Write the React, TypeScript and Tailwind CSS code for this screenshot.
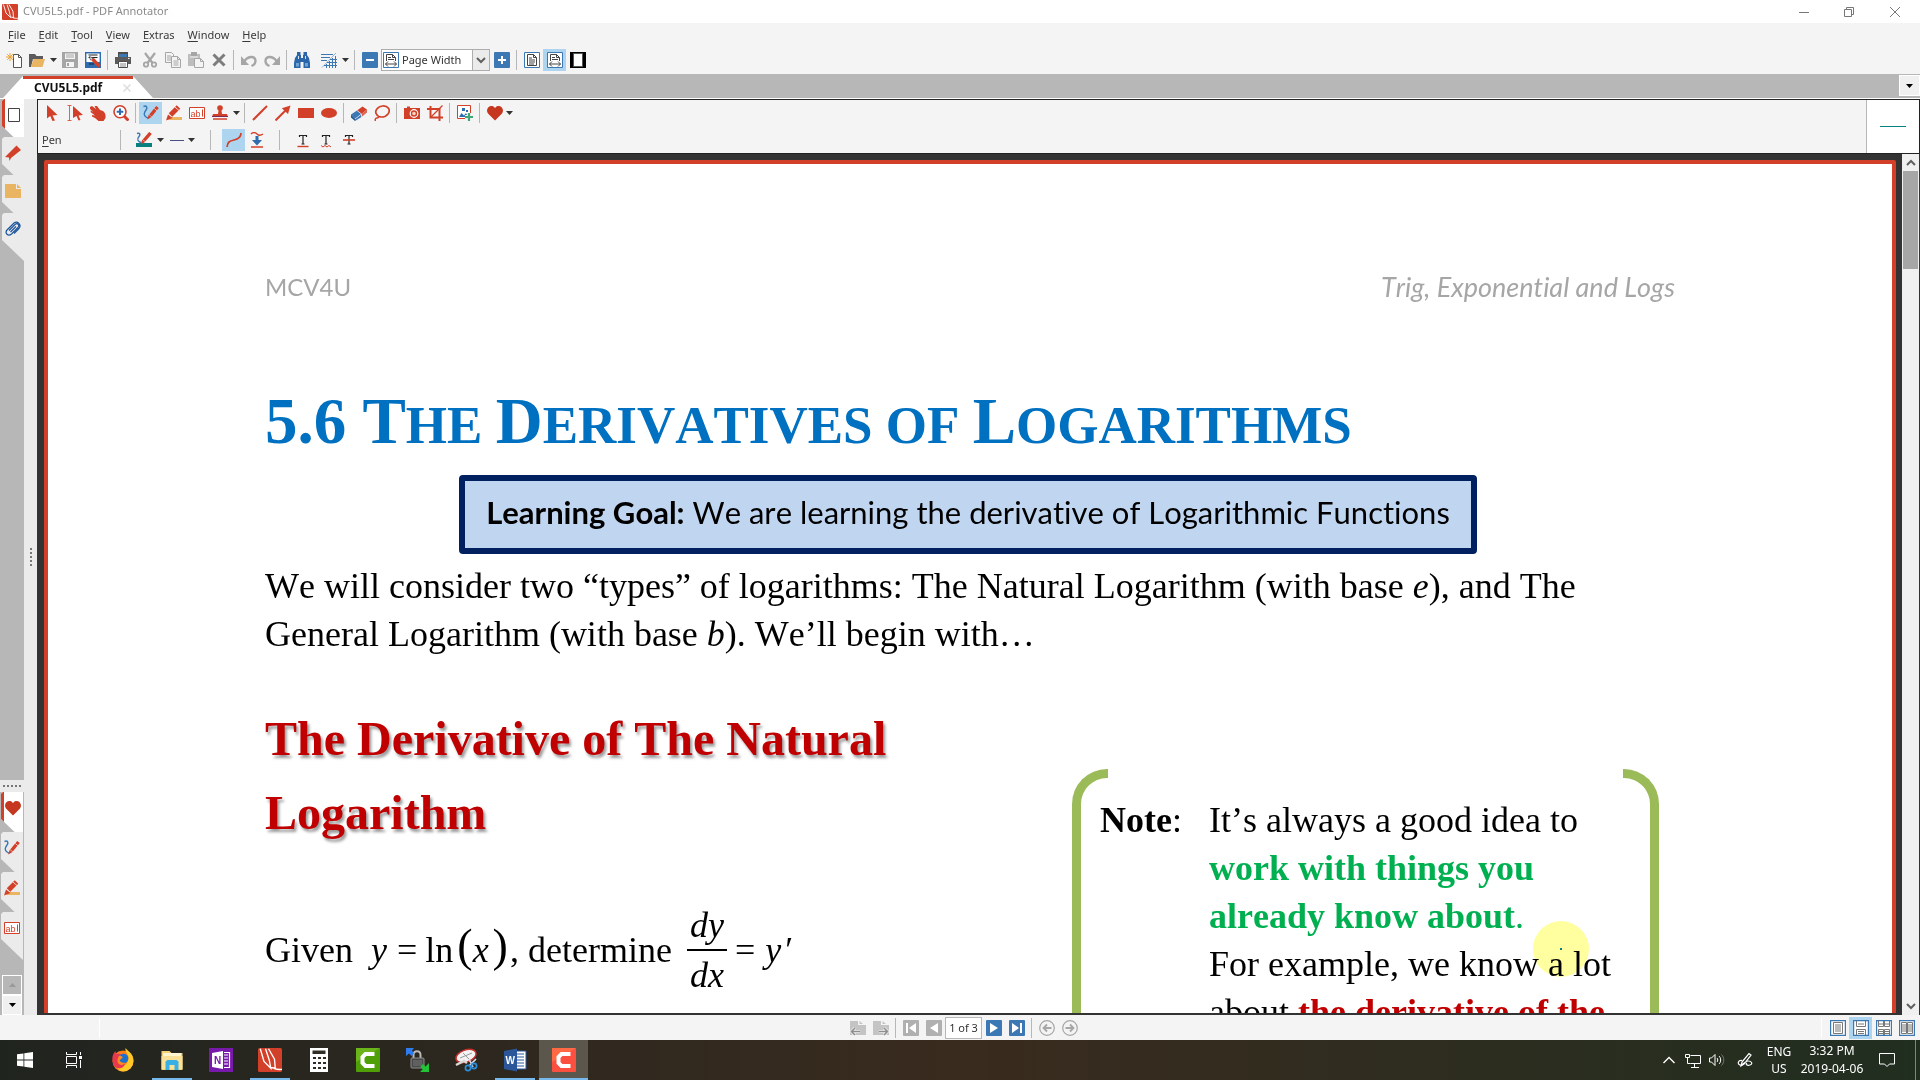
import type { ReactNode } from "react";
import clsx from "clsx";

const RED = "#d2402a";
const BLUE = "#3c78b4";
const GRAY = "#a6a6a6";
const DARK = "#555555";

function Svg({ children, size = 16, box = 16 }: { children: ReactNode; size?: number; box?: number }) {
  return (
    <svg width={size} height={size} viewBox={`0 0 ${box} ${box}`} fill="none" className="block shrink-0" aria-hidden="true">
      {children}
    </svg>
  );
}

/* ---------- Toolbar icons ---------- */

const AppLogo = ({ size = 16 }: { size?: number }) => (
  <Svg size={size}>
    <rect width="16" height="16" rx="1" fill={RED} />
    <path d="M1.500.5l2.500 8.500 4.500 4.500L7.500 8 5 .5M7 .5l4 7 .5 6-3-.5M10.500 13.500c2 .8 3.500 1 5.500.7" stroke="#fff" strokeWidth=".9" />
  </Svg>
);

const NewDoc = () => (
  <Svg>
    <path d="M7.500 2.500h5l3 3v10h-8z" fill="#fff" stroke={DARK} />
    <path d="M12.500 2.500v3h3" stroke={DARK} />
    <path d="M4 1v8M0 5h8M1.200 2.200l5.600 5.600M6.800 2.200L1.200 7.800" stroke="#e8a33a" />
  </Svg>
);

const OpenFolder = () => (
  <Svg>
    <path d="M0 2h6l1.500 2H14v3H4l-2 8H0z" fill="#5b5b5b" />
    <path d="M4.500 7H16l-2.500 8H2z" fill="#e9b563" />
  </Svg>
);

const Save = ({ color = GRAY }: { color?: string }) => (
  <Svg>
    <path d="M0 0h16v16H0z" fill={color} />
    <path d="M3 1.500h10v5.500H3z" fill="#f4f4f4" />
    <path d="M4 3h8M4 5h8" stroke={color} />
    <path d="M4 10h8v5H4z" fill="#f4f4f4" />
    <path d="M5 11h2v3H5z" fill={color} />
  </Svg>
);

const SaveAnnotated = () => (
  <Svg>
    <path d="M.7.700h14.600v14.600H.7z" fill="#fff" stroke="#2d6cb0" strokeWidth="1.400" />
    <path d="M1 10h14v5H1z" fill="#2d6cb0" />
    <path d="M3.500 3h9M3.500 5.500h9M4 12h5" stroke="#222" />
    <path d="M7.500 7l7 7.500" stroke={RED} strokeWidth="3.400" />
    <path d="M4.500 4.500l1 3.500 2.500-2z" fill="#fff" stroke="#222" strokeWidth=".6" />
  </Svg>
);

const Print = () => (
  <Svg>
    <path d="M3 0h10v5H3z" fill="#4d4d4d" />
    <path d="M4 2h8v3H4z" fill={BLUE} />
    <path d="M0 5h16v7H0z" fill="#5b5b5b" />
    <path d="M3.500 9.500h9v6h-9z" fill="#fff" stroke="#4d4d4d" />
    <path d="M5 12h6M5 14h6" stroke="#888" />
    <path d="M13 6.500h1.500" stroke="#fff" />
  </Svg>
);

const Cut = () => (
  <Svg>
    <path d="M3 1l7.500 10M13 1L5.500 11" stroke={GRAY} strokeWidth="2.200" />
    <circle cx="4" cy="12.500" r="2.200" stroke={GRAY} strokeWidth="1.800" />
    <circle cx="12" cy="12.500" r="2.200" stroke={GRAY} strokeWidth="1.800" />
  </Svg>
);

const Copy = () => (
  <Svg>
    <path d="M.5.500h6l2 2v8h-8zM2 4h4M2 6h4M2 8h4" stroke={GRAY} />
    <path d="M6.500 4.500h6l3 3v8h-9z" fill="#f4f4f4" stroke={GRAY} />
    <path d="M12.500 4.500v3h3M8.500 9h5M8.500 11h5M8.500 13h5" stroke={GRAY} />
  </Svg>
);

const Paste = () => (
  <Svg>
    <path d="M0 2h12v12H0z" fill="#bdbdbd" />
    <path d="M3 0h6v4H3z" fill={GRAY} />
    <path d="M2 5h8" stroke="#f4f4f4" />
    <path d="M6.500 6.500h6l3 3v6h-9z" fill="#f4f4f4" stroke={GRAY} />
    <path d="M12.500 6.500v3h3" stroke={GRAY} />
  </Svg>
);

const Delete = () => (
  <Svg>
    <path d="M2.500 2.500l11 11M13.500 2.500l-11 11" stroke="#7d7d7d" strokeWidth="3" />
  </Svg>
);

const Undo = ({ flip = false }: { flip?: boolean }) => (
  <Svg>
    <g transform={flip ? "translate(16 0) scale(-1 1)" : undefined}>
      <path d="M3 10c3-6 11.500-7 11.500-1 0 2-1.500 4-4 5" stroke={GRAY} strokeWidth="2.400" />
      <path d="M0 4v9h8z" fill={GRAY} />
    </g>
  </Svg>
);

const Binoculars = () => (
  <Svg>
    <path d="M3 0h3.500v3H7v3h2V3h.5V0H13v3l2 3 1 5v5H9.500V10h-3v6H0v-5l1-5 2-3z" fill="#2b67a8" />
    <path d="M2 11h3v3.500H2zM11 11h3v3.500h-3z" fill="#6ea3d8" />
    <path d="M4.500 4v3M11.500 4v3" stroke="#cfe2f5" />
  </Svg>
);

const GridTool = () => (
  <Svg>
    <path d="M0 2.500h12M0 5.500h9M0 8.500h6" stroke={BLUE} />
    <path d="M1 15.500L15 1" stroke="#8db3d8" />
    <path d="M3 13.500h13M6 10.500h10M9 7.500h7M5.500 12v4M8.500 9v7M11.500 6v10M14.500 4v12" stroke={BLUE} />
  </Svg>
);

const ZoomBox = ({ plus = false }: { plus?: boolean }) => (
  <Svg>
    <rect width="16" height="16" rx="1" fill={BLUE} />
    <path d={plus ? "M4 8h8M8 4v8" : "M4 8h8"} stroke="#fff" strokeWidth="2" />
  </Svg>
);

const PageIcon = ({ width = false }: { width?: boolean }) => (
  <Svg>
    <path d="M.5.500h15v15H.5z" fill="#fff" stroke={BLUE} />
    {width ? (
      <path d="M3.500 9V2.500h6l3 3V9M9.500 2.500v3h3M5 5.500h3M5 7.500h6M2.500 12h11M5 9.500L2.500 12 5 14.500M11 9.500l2.500 2.500-2.500 2.500" stroke="#444" />
    ) : (
      <path d="M3.500 2.500h6l3 3v8h-9zM9.500 2.500v3h3M5 6h3M5 8h6M5 10h6M5 12h5" stroke="#444" />
    )}
  </Svg>
);

const FullPage = () => (
  <Svg>
    <path d="M0 0h16v16H0z" fill="#000" />
    <path d="M3.500 1.500h9v13h-9z" fill="#fff" stroke="#555" />
  </Svg>
);

/* ---------- Annotation icons ---------- */

const Arrow = () => (
  <Svg>
    <path d="M3 0l10.500 10-5 .5 2.500 5-2.500.5-2.300-5L3 13.500z" fill={RED} />
  </Svg>
);

const TextSelect = () => (
  <Svg>
    <path d="M.5.500h4M.5 15.500h4M2.500.5v15" stroke={RED} strokeWidth=".8" />
    <path d="M6 1l10 9-4.500.500 2 4.500-2 .5-2-4.500L6 13z" fill={RED} />
  </Svg>
);

const Hand = () => (
  <Svg>
    <path d="M0 2l2-1 4 3L4.500 1 7 1l3 4 3 1c2 1.500 3 4 2.500 7l-2 3h-5L5 13 2 11.500l0-1.500 3 .5L.5 7 1 5.500l3 2L0 4z" fill={RED} />
  </Svg>
);

const Magnifier = () => (
  <Svg>
    <path d="M11 11l4.500 4.500" stroke={RED} strokeWidth="3" />
    <circle cx="7" cy="6.800" r="6" fill="#fff" stroke={RED} strokeWidth="1.600" />
    <path d="M7 3.500v6.600M3.700 6.800h6.600" stroke="#2d6cb0" strokeWidth="2" />
  </Svg>
);

const Pen = () => (
  <Svg>
    <path d="M.5 1.500C4 0 4.500 3 3 5s-3 5 0 7c2 1.500 3 .5 3 .5" stroke={BLUE} strokeWidth="1.400" />
    <path d="M7.500 10.500l7-8.500" stroke={RED} strokeWidth="3.400" />
    <path d="M4 14.500l1.800-4.800 2.800 2.300z" fill={RED} />
    <path d="M11.300 3.500l3 2.500" stroke="#f7d9d2" strokeWidth=".8" />
  </Svg>
);

const Marker = () => (
  <Svg>
    <path d="M5 12h11v3H2z" fill="#e9b563" />
    <path d="M4.500 10L12.500 2" stroke={RED} strokeWidth="5" />
    <path d="M0 15.500l2-6 4.500 3.500z" fill={RED} />
    <path d="M9 2l5 4.500" stroke="#f7d9d2" />
  </Svg>
);

const TextBox = () => (
  <Svg>
    <path d="M.5 2.500h15v11H.5z" fill="#fff" stroke={RED} />
    <text x="1.500" y="11.500" fontSize="9" fontFamily="Liberation Sans, sans-serif" fill={RED}>ab</text>
    <path d="M13.500 4.500v7" stroke={RED} />
  </Svg>
);

const Stamp = () => (
  <Svg>
    <circle cx="8" cy="3" r="2.800" fill={RED} />
    <path d="M6.800 4h2.400l.8 5H15l1 3H0l1-3h5z" fill={RED} />
    <path d="M0 11.500h16" stroke="#7a2a55" />
    <path d="M1 14h14" stroke={RED} strokeWidth="1.500" />
  </Svg>
);

const Line = () => (
  <Svg>
    <path d="M1 15L15 1" stroke={RED} strokeWidth="2" />
  </Svg>
);

const ArrowLine = () => (
  <Svg>
    <path d="M.5 15.500L11 5" stroke={RED} strokeWidth="2" />
    <path d="M15.500.5L13 9 6.800 3.200z" fill={RED} />
  </Svg>
);

const Rect = () => (
  <Svg>
    <path d="M0 3h16v10H0z" fill={RED} />
  </Svg>
);

const Ellipse = () => (
  <Svg>
    <ellipse cx="8" cy="8" rx="8" ry="5" fill={RED} />
  </Svg>
);

const Eraser = () => (
  <Svg>
    <path d="M0 9.500l6-4 4.500 3.500-6.500 5z" fill={BLUE} />
    <path d="M0 9.500v3L4 16v-2z" fill="#20568f" />
    <path d="M4 14l6.500-5v3L4 16z" fill="#3c78b4" />
    <path d="M6 5.500L11.500 1.500 16 4.500 10.500 9z" fill={RED} />
    <path d="M10.500 9L16 4.500v3L10.500 12z" fill="#dc6450" />
    <path d="M6 5.500L10.500 9v3M4 14l6-4.600" stroke="#e8eef5" strokeWidth=".7" />
  </Svg>
);

const Lasso = () => (
  <Svg>
    <path d="M3.500 10.500C-.5 7 3 1.500 8.500 1s8.500 4 5.500 8c-2 2.500-6 3.500-9.500 2.500" stroke={RED} strokeWidth="1.700" />
    <path d="M3 10.500c2 0 2 2.500 0 2.500S1 15 1.500 16" stroke={RED} strokeWidth="1.500" />
  </Svg>
);

const Camera = () => (
  <Svg>
    <path d="M0 3h3V1.500h3V3h10v11H0z" fill={RED} />
    <circle cx="10" cy="8.500" r="3.800" fill={RED} stroke="#fff" strokeWidth="1.200" />
    <circle cx="10" cy="8.500" r="1.800" fill="#f8d2c0" />
  </Svg>
);

const Crop = () => (
  <Svg>
    <path d="M3.500 1v11.500H16M0 4h12.500V16" stroke={RED} strokeWidth="2" />
    <path d="M4 12L15.500.5" stroke={RED} strokeWidth="1.200" />
  </Svg>
);

const ImageAdd = () => (
  <Svg>
    <path d="M.5.500h13v13H.5z" fill="#fff" stroke={RED} />
    <path d="M2 12l2.500-4L7 10.500 9 8l2 4z" fill="#2d6cb0" />
    <path d="M5 3h3v3H5zM9 5h2v2H9z" fill="#2d6cb0" />
    <path d="M12 8v8M8 12h8" stroke="#f4f4f4" strokeWidth="4" />
    <path d="M12 8v8M8 12h8" stroke="#3fa77a" strokeWidth="2.200" />
  </Svg>
);

const Heart = () => (
  <Svg>
    <path d="M8 15.500L1 8.500C-2 4 2.500-.5 6.500 1.500L8 3l1.500-1.500C13.500-.5 18 4 15 8.500z" fill="#c5371f" />
  </Svg>
);

const PenTeal = () => (
  <Svg>
    <path d="M0 11h16v4H0z" fill="#078080" />
    <path d="M1 1.500c3-1 3.500 1 2 3s-2 3 0 5c1 1 2 .5 2 .5" stroke={BLUE} strokeWidth="1.400" />
    <path d="M8 8.500L14.500 1" stroke={RED} strokeWidth="3.400" />
    <path d="M4.500 12.500l1.800-5 2.900 2.500z" fill={RED} />
  </Svg>
);

const LineStyle = () => (
  <Svg>
    <path d="M1 8.500h14" stroke="#4a4f7d" />
  </Svg>
);

const Smooth = () => (
  <Svg>
    <path d="M1 15c.5-5 2.500-6 7-7s7-2.500 7-7" stroke={RED} strokeWidth="1.700" />
  </Svg>
);

const Settle = () => (
  <Svg>
    <path d="M2 2c2-2 4-2 6 0s4 1.500 6 0M2 15h12" stroke={RED} strokeWidth="1.300" />
    <path d="M6.500 4h3v4H13l-5 5.500L3 8h3.500z" fill="#2d6cb0" />
  </Svg>
);

const TextMark = ({ kind }: { kind: "under" | "wave" | "strike" }) => (
  <Svg>
    <path d="M4.500 5V3.500h7V5M8 3.500V12M6.500 12h3" stroke="#222" strokeWidth="1.200" />
    {kind === "under" && <path d="M2.500 14.500h11" stroke={RED} strokeWidth="1.400" />}
    {kind === "wave" && <path d="M3 13.500l2 1.500 2-1.500L9 15l2-1.500 2 1.500" stroke={RED} />}
    {kind === "strike" && <path d="M2 8h12" stroke={RED} strokeWidth="1.600" />}
  </Svg>
);

const Thumbnail = () => (
  <Svg>
    <path d="M2.500 1.500h11v13h-11z" fill="#fff" stroke="#444" />
  </Svg>
);

const Bookmark = () => (
  <Svg>
    <path d="M11.500.5L16 5 6 13l-1.500 3L4 12.500 0 12z" fill={RED} />
  </Svg>
);

const StickyNote = () => (
  <Svg>
    <path d="M0 1h11v5h5v9H0z" fill="#e9b563" />
    <path d="M12 1l4 4h-4z" fill="#e9b563" />
  </Svg>
);

const Clip = () => (
  <Svg>
    <path d="M4 9.500l6-6c2.500-2 5 .5 3 3L6.500 13c-3.500 3-7-1-4.500-4l7-7c3.500-2.500 8 1.500 5 5.500l-5 5M5.500 11l5.500-5.500" stroke="#1c559c" strokeWidth="1.200" />
  </Svg>
);

const Caret = ({ tone = "#333" }: { tone?: string }) => (
  <svg width="7" height="4" viewBox="0 0 7 4" className="block" aria-hidden="true">
    <path d="M0 0h7L3.500 4z" fill={tone} />
  </svg>
);

const Chevron = ({ up = false }: { up?: boolean }) => (
  <svg width="10" height="7" viewBox="0 0 10 7" className="block" fill="none" aria-hidden="true">
    <path d={up ? "M1 6l4-4 4 4" : "M1 1l4 4 4-4"} stroke="#606060" strokeWidth="2" />
  </svg>
);

/* ---------- Building blocks ---------- */

function IconButton({ label, active = false, children }: { label: string; active?: boolean; children: ReactNode }) {
  return (
    <button aria-label={label} title={label} className={clsx("flex h-[22px] w-[23px] shrink-0 items-center justify-center", active && "bg-[#aed5f0]")}>
      {children}
    </button>
  );
}

const DropButton = ({ label }: { label: string }) => (
  <button aria-label={label} className="flex h-[22px] w-[10px] shrink-0 items-center justify-center">
    <Caret />
  </button>
);

const Divider = () => <span className="mx-[3px] h-5 w-px shrink-0 bg-[#b7b7b7]" />;

function TitleBar() {
  return (
    <header className="flex h-[23px] items-center bg-white px-0.5">
      <AppLogo />
      <span className="ml-[5px] text-[11px] text-[#8a8a8a]">CVU5L5.pdf - PDF Annotator</span>
      <div className="ml-auto flex">
        <button aria-label="Minimize" className="flex h-[23px] w-[45px] items-center justify-center">
          <Svg size={10} box={10}><path d="M0 5.500h10" stroke="#777" /></Svg>
        </button>
        <button aria-label="Restore" className="flex h-[23px] w-[45px] items-center justify-center">
          <Svg size={10} box={10}><path d="M.5 2.500h7v7h-7zM2.500 2.500v-2h7v7h-2" stroke="#777" /></Svg>
        </button>
        <button aria-label="Close" className="flex h-[23px] w-[47px] items-center justify-center">
          <Svg size={10} box={10}><path d="M0 0l10 10M10 0L0 10" stroke="#777" /></Svg>
        </button>
      </div>
    </header>
  );
}

const menus = ["File", "Edit", "Tool", "View", "Extras", "Window", "Help"];

function MenuBar() {
  return (
    <nav className="flex h-6 items-center gap-[13px] pl-2 text-[11px] text-[#3a3a3a]">
      {menus.map((name) => (
        <button key={name}>
          <span className="underline underline-offset-2">{name[0]}</span>
          {name.slice(1)}
        </button>
      ))}
    </nav>
  );
}

function MainToolbar() {
  return (
    <div className="flex h-[27px] items-center pb-px pl-0.5">
      <IconButton label="New"><NewDoc /></IconButton>
      <IconButton label="Open"><OpenFolder /></IconButton>
      <DropButton label="Recent documents" />
      <IconButton label="Save"><Save /></IconButton>
      <IconButton label="Save annotated"><SaveAnnotated /></IconButton>
      <Divider />
      <IconButton label="Print"><Print /></IconButton>
      <div className="ml-1 flex">
        <IconButton label="Cut"><Cut /></IconButton>
        <IconButton label="Copy"><Copy /></IconButton>
        <IconButton label="Paste"><Paste /></IconButton>
        <IconButton label="Delete"><Delete /></IconButton>
      </div>
      <Divider />
      <IconButton label="Undo"><Undo /></IconButton>
      <IconButton label="Redo"><Undo flip /></IconButton>
      <Divider />
      <IconButton label="Find"><Binoculars /></IconButton>
      <div className="ml-1 mr-px flex">
        <IconButton label="Grid"><GridTool /></IconButton>
        <DropButton label="Grid options" />
      </div>
      <Divider />
      <IconButton label="Zoom out"><ZoomBox /></IconButton>
      <div className="flex h-[22px] w-[109px] items-center border border-[#adadad] bg-white pl-px">
        <PageIcon width />
        <select aria-label="Zoom" className="w-[73px] appearance-none bg-transparent pl-[3px] text-[11px] text-[#333] outline-none">
          <option>Page Width</option>
        </select>
        <span className="pointer-events-none flex h-5 flex-1 items-center justify-center border-l border-[#adadad] bg-[#ebebeb]">
          <Chevron />
        </span>
      </div>
      <IconButton label="Zoom in"><ZoomBox plus /></IconButton>
      <Divider />
      <IconButton label="Whole page"><PageIcon /></IconButton>
      <IconButton label="Page width" active><PageIcon width /></IconButton>
      <IconButton label="Full screen"><FullPage /></IconButton>
    </div>
  );
}

function TabStrip() {
  return (
    <div className="flex h-6 items-start bg-[#b7b7b7]">
      <div className="ml-[3px] mt-0.5 flex h-[22px] w-[150px] items-start bg-white [clip-path:polygon(20px_0,130px_0,100%_100%,0_100%)]">
        <div className="mx-[20px] flex h-5 flex-1 items-center border-t-3 border-[#d2402a] pl-[11px]">
          <span className="text-xs font-bold leading-4 text-[#111]">CVU5L5.pdf</span>
          <button aria-label="Close tab" className="ml-auto pr-0.5">
            <Svg size={8} box={8}><path d="M.5.500l7 7M7.500.5l-7 7" stroke="#dcdcdc" strokeWidth="1.500" /></Svg>
          </button>
        </div>
      </div>
      <button aria-label="All tabs" className="ml-auto mt-px flex h-[21px] w-[21px] items-center justify-center border border-white bg-[#f0f0f0]">
        <Caret tone="#000" />
      </button>
    </div>
  );
}

function AnnotationToolbar() {
  return (
    <div className="flex h-[55px] items-stretch border-y border-l border-[#222] bg-[#f4f4f4]">
      <div className="flex flex-1 flex-col">
        <div className="flex h-[27px] items-center pb-0.5 pl-0.5">
          <IconButton label="Select"><Arrow /></IconButton>
          <IconButton label="Select text"><TextSelect /></IconButton>
          <IconButton label="Pan"><Hand /></IconButton>
          <IconButton label="Zoom"><Magnifier /></IconButton>
          <Divider />
          <IconButton label="Pen" active><Pen /></IconButton>
          <IconButton label="Marker"><Marker /></IconButton>
          <IconButton label="Text"><TextBox /></IconButton>
          <IconButton label="Stamp"><Stamp /></IconButton>
          <DropButton label="Stamps" />
          <Divider />
          <IconButton label="Line"><Line /></IconButton>
          <IconButton label="Arrow"><ArrowLine /></IconButton>
          <IconButton label="Rectangle"><Rect /></IconButton>
          <IconButton label="Ellipse"><Ellipse /></IconButton>
          <Divider />
          <IconButton label="Eraser"><Eraser /></IconButton>
          <IconButton label="Lasso"><Lasso /></IconButton>
          <Divider />
          <IconButton label="Snapshot"><Camera /></IconButton>
          <IconButton label="Crop"><Crop /></IconButton>
          <Divider />
          <IconButton label="Insert image"><ImageAdd /></IconButton>
          <Divider />
          <IconButton label="Favorites"><Heart /></IconButton>
          <button aria-label="Favorite tools"><Caret /></button>
        </div>
        <div className="flex h-[26px] items-center pl-1">
          <span className="w-[75px] text-[11px] text-[#3a3a3a]"><span className="underline underline-offset-2">P</span>en</span>
          <Divider />
          <div className="ml-2 flex">
            <IconButton label="Pen color"><PenTeal /></IconButton>
            <DropButton label="Colors" />
            <IconButton label="Line style"><LineStyle /></IconButton>
            <button aria-label="Line styles" className="flex w-[7px] items-center"><Caret /></button>
          </div>
          <div className="ml-3 mr-2 flex"><Divider /></div>
          <IconButton label="Smooth strokes" active><Smooth /></IconButton>
          <IconButton label="Snap to line"><Settle /></IconButton>
          <div className="mx-2 flex"><Divider /></div>
          <IconButton label="Underline text"><TextMark kind="under" /></IconButton>
          <IconButton label="Squiggly underline"><TextMark kind="wave" /></IconButton>
          <IconButton label="Strike through"><TextMark kind="strike" /></IconButton>
        </div>
      </div>
      <div className="flex w-[54px] items-center justify-center border-x border-l-[#b7b7b7] border-r-[#222] bg-white">
        <span className="h-px w-[26px] bg-[#078080]" />
      </div>
    </div>
  );
}

function SideTab({ label, active = false, children }: { label: string; active?: boolean; children: ReactNode }) {
  return (
    <button
      aria-label={label}
      className={clsx(
        "flex h-12 w-[22px] shrink-0 items-start pl-[3px] pt-2 [clip-path:polygon(2px_0,100%_0,100%_100%,0_27px,0_2px)]",
        active ? "relative border-l-3 border-[#d2402a] bg-white pl-px" : "bg-[#ebebeb]",
      )}
    >
      {children}
    </button>
  );
}

function Sidebar() {
  return (
    <aside className="flex w-[37px] shrink-0 bg-[#ebebeb]">
      <div className="flex w-6 flex-col bg-[#b7b7b7]">
        <div className="flex flex-col items-end -space-y-2.5">
          <SideTab label="Pages" active><Thumbnail /></SideTab>
          <SideTab label="Bookmarks"><Bookmark /></SideTab>
          <SideTab label="Annotations"><StickyNote /></SideTab>
          <SideTab label="Attachments"><Clip /></SideTab>
        </div>
        <div className="mt-auto flex h-3 w-full items-center justify-center gap-0.5 bg-[#ebebeb]">
          {[0, 1, 2, 3, 4].map((i) => <span key={i} className="size-0.5 bg-[#777]" />)}
        </div>
        <div className="flex flex-col items-center -space-y-2">
          <SideTab label="Favorites" active><Heart /></SideTab>
          <SideTab label="Pens"><Pen /></SideTab>
          <SideTab label="Markers"><Marker /></SideTab>
          <SideTab label="Text boxes"><TextBox /></SideTab>
        </div>
        <div className="mt-[15px] flex w-full flex-col px-0.5">
          <button aria-label="Scroll up" className="flex h-5 items-center justify-center border border-white bg-[#b7b7b7]">
            <span className="rotate-180"><Caret tone="#999" /></span>
          </button>
          <button aria-label="Scroll down" className="flex h-5 items-center justify-center border border-white bg-[#f0f0f0]">
            <Caret tone="#000" />
          </button>
        </div>
      </div>
      <div className="flex flex-1 flex-col items-center justify-center gap-0.5">
        {[0, 1, 2, 3, 4].map((i) => <span key={i} className="size-0.5 bg-[#777]" />)}
      </div>
    </aside>
  );
}

/* ---------- Document ---------- */

function DocumentTitle() {
  return (
    <h1 className="mt-[76px] h-20 whitespace-nowrap text-[65px] font-bold leading-[80px] text-[#0070c0]">
      5.6 T<span className="text-[53px] leading-none">HE </span>
      D<span className="text-[53px] leading-none">ERIVATIVES OF </span>
      L<span className="text-[53px] leading-none">OGARITHMS</span>
    </h1>
  );
}

function Equation() {
  return (
    <p className="mt-[55px] flex items-center whitespace-nowrap">
      <span>Given</span>
      <i className="ml-[18px]">y</i>
      <span className="ml-2.5">=</span>
      <span className="ml-2">ln</span>
      <span className="ml-1 pb-2 text-[46px] leading-none">(</span>
      <i>x</i>
      <span className="ml-1 pb-2 text-[46px] leading-none">)</span>
      <span className="ml-0.5">, determine</span>
      <span className="ml-[15px] flex flex-col items-center italic leading-10">
        <span className="px-0.5 pb-1">dy</span>
        <span className="h-0.5 w-10 bg-black" />
        <span className="px-0.5 pt-1">dx</span>
      </span>
      <span className="ml-2">=</span>
      <i className="ml-2.5">y</i>
      <span className="ml-1">′</span>
    </p>
  );
}

function NoteBox() {
  return (
    <aside className="mr-4 mt-[67px] flex h-[300px] w-[587px] shrink-0">
      <div className="w-9 shrink-0 rounded-tl-[35px] border-l-9 border-t-9 border-[#9bbb59]" />
      <div className="-ml-2 flex flex-1 pt-[27px]">
        <span className="w-[109px] shrink-0"><b>Note</b>:</span>
        <div className="-mr-5 flex-1">
          <p>
            It’s always a good idea to <span className="text-[#00b050]"><b>work with things you already know about</b>.</span>
          </p>
          <p>
            For example, we know a lot about <b className="text-[#c00000]">the derivative of the</b>
          </p>
        </div>
      </div>
      <div className="w-9 shrink-0 rounded-tr-[35px] border-r-9 border-t-9 border-[#9bbb59]" />
    </aside>
  );
}

function Document() {
  return (
    <main className="relative min-w-0 flex-1 overflow-hidden border-b-2 border-[#333] bg-[#333] pl-[7px] pr-1.5 pt-[6px]">
      <article className="h-[1200px] rounded-t-xs border-4 border-[#d2402a] bg-white px-[217px] pt-[105px] font-['Liberation_Serif',serif] text-[36px] leading-[48px] text-black [font-kerning:none] [font-variant-ligatures:none]">
        <div className="flex justify-between font-[Lato,sans-serif] leading-9 text-[#a6a6a6]">
          <span className="text-[24px]">MCV4U</span>
          <i className="text-[27px]">Trig, Exponential and Logs</i>
        </div>
        <DocumentTitle />
        <div className="ml-[194px] mt-3.5 flex h-[79px] w-[1018px] items-center justify-center whitespace-nowrap rounded-sm border-6 border-[#002060] bg-[#c0d5ef] pb-1.5 font-[Lato,sans-serif] text-[31px]">
          <p><b>Learning Goal:</b> We are learning the derivative of Logarithmic Functions</p>
        </div>
        <p className="mt-2">
          We will consider two “types” of logarithms: The Natural Logarithm (with base <i>e</i>), and The General Logarithm (with base <i>b</i>). We’ll begin with…
        </p>
        <div className="mt-11 flex items-start justify-between">
          <div>
            <h2 className="w-[700px] text-[48px] font-bold leading-[74px] text-[#c00000] [text-shadow:2px_3px_3px_rgba(0,0,0,0.4)]">
              The Derivative of The Natural Logarithm
            </h2>
            <Equation />
          </div>
          <NoteBox />
        </div>
      </article>
      {/* pointer highlight */}
      <div className="absolute left-[1496px] top-[767px] flex size-14 items-center justify-center rounded-full bg-[#ffffa0] mix-blend-multiply">
        <span className="size-0.5 bg-[#078080]" />
      </div>
    </main>
  );
}

function ScrollBar() {
  return (
    <div className="flex w-[18px] shrink-0 flex-col border-r border-[#333] bg-[#f0f0f0]">
      <button aria-label="Scroll up" className="flex h-[17px] items-center justify-center"><Chevron up /></button>
      <div className="mx-px h-[98px] bg-[#a6a6a6]" />
      <button aria-label="Scroll down" className="mt-auto flex h-[17px] items-center justify-center"><Chevron /></button>
    </div>
  );
}

/* ---------- Status bar ---------- */

const NavBox = ({ d, on = false }: { d: string; on?: boolean }) => (
  <Svg>
    <rect width="16" height="16" rx="1" fill={on ? BLUE : "#b0b0b0"} />
    <path d={d} fill="#fff" />
  </Svg>
);

const HistoryArrow = ({ d }: { d: string }) => (
  <Svg>
    <circle cx="8" cy="8" r="7.300" stroke={GRAY} strokeWidth="1.200" />
    <path d={d} stroke={GRAY} strokeWidth="1.800" />
  </Svg>
);

const PageMove = ({ d }: { d: string }) => (
  <Svg>
    <path d="M0 1h8v4h8v10H0z" fill="#c4c4c4" />
    <path d="M9.500 1L13 4H9.500z" fill="#c4c4c4" />
    <path d={d} stroke="#f4f4f4" strokeWidth="3" />
    <path d={d} stroke="#8f8f8f" strokeWidth="1.600" />
  </Svg>
);

const Layout = ({ d }: { d: string }) => (
  <Svg>
    <path d="M.5.500h15v15H.5z" fill="#fff" stroke={BLUE} strokeWidth="1.400" />
    <path d={d} stroke="#777" />
  </Svg>
);

function StatusBar() {
  return (
    <footer className="flex h-[25px] items-center bg-[#f4f4f4] text-[#333]">
      <span className="ml-[99px] h-5 w-px bg-white" />
      <div className="flex flex-1 items-center justify-center pl-1.5">
        <IconButton label="Previous document"><PageMove d="M1 11.500h9M5 8l-3.500 3.500L5 15" /></IconButton>
        <IconButton label="Next document"><PageMove d="M6 11.500h9M11 8l3.500 3.500L11 15" /></IconButton>
        <Divider />
        <IconButton label="First page"><NavBox d="M3 3h2v10H3zM13 3v10L6 8z" /></IconButton>
        <IconButton label="Previous page"><NavBox d="M12 3v10L4 8z" /></IconButton>
        <input aria-label="Page" defaultValue="1 of 3" className="h-[22px] w-[37px] border border-[#b7b7b7] bg-white text-center text-[11px]" />
        <IconButton label="Next page"><NavBox on d="M4 3v10l8-5z" /></IconButton>
        <IconButton label="Last page"><NavBox on d="M3 3v10l7-5zM11 3h2v10h-2z" /></IconButton>
        <Divider />
        <IconButton label="Back"><HistoryArrow d="M12.500 8H4.500M8 4.500L4.500 8 8 11.500" /></IconButton>
        <IconButton label="Forward"><HistoryArrow d="M3.500 8h8M8 4.500L11.500 8 8 11.500" /></IconButton>
      </div>
      <span className="mr-1 h-5 w-px bg-white" />
      <div className="flex pr-0.5">
        <IconButton label="Single page"><Layout d="M3.500 2.500h9v11h-9zM5 5h6M5 7h6M5 9h6M5 11h6" /></IconButton>
        <IconButton label="Continuous" active><Layout d="M3.500 1v5.500h9V1M5 4h6M3.500 15V9.500h9V15M5 11.500h6M5 13.500h6" /></IconButton>
        <IconButton label="Two pages continuous"><Layout d="M2.500 1v5.500h5V1M8.500 1v5.500h5V1M2.500 15V9.500h5V15M8.500 15V9.500h5V15M3 4h10M3 11.500h10M3 13.500h10" /></IconButton>
        <IconButton label="Two pages"><Layout d="M2.500 2.500h5v11h-5zM8.500 2.500h5v11h-5zM3 5h10M3 7h10M3 9h10M3 11h10" /></IconButton>
      </div>
    </footer>
  );
}

/* ---------- Taskbar ---------- */

const Windows = () => (
  <Svg>
    <path d="M0 2.300l6.500-.9v6.100H0zM7.300 1.300L16 0v7.500H7.300zM0 8.400h6.500v6.200L0 13.700zM7.300 8.400H16V16l-8.700-1.300z" fill="#fff" />
  </Svg>
);

const TaskView = () => (
  <Svg>
    <path d="M.5 0v2.500h10V0M.5 4.500h10v7H.5zM.5 16v-2.500h10V16M14.500 0v3M14.500 8v8" stroke="#fff" />
    <path d="M13 4h3v3h-3z" fill="#fff" />
  </Svg>
);

const Firefox = () => (
  <Svg size={24} box={24}>
    <circle cx="12" cy="13" r="10.500" fill="#ff7a1a" />
    <path d="M12 23.500A10.500 10.500 0 0022.500 13c0-4-1.500-7-4-9C16 2 15 .5 14.500 0c-.5 3 1 4.500 2 6.500 2 4 .5 9-3.500 11-3 1.500-7 .5-8.500-2 1 4.500 4 8 7.500 8z" fill="#ffc928" />
    <path d="M1.500 12C1 7.500 3 4.500 4.500 3c0 1.500.5 2.500 1.500 3 1-.5 3-.500 4 .5-2 1-1.500 3-3 5 0 4 4 6 7 4.500-1 4-6 6-9.500 3C2.500 17 1.500 15 1.500 12z" fill="#e8384f" />
    <circle cx="12.500" cy="10.500" r="4.800" fill="#1d6fd0" />
    <path d="M8 8c2-1 4 .5 3.500 2-1.500.5-2 2-3 2 .5 2 3 3.500 5.500 2.500-1.500 3-5.500 3-7 .500-1-2-.5-5 1-7z" fill="#ff8b1f" />
  </Svg>
);

const Explorer = () => (
  <Svg size={24} box={24}>
    <path d="M1.500 3h8l2 2h11v17h-21z" fill="#f3d27a" />
    <path d="M3 5h18v6H3z" fill="#fff5cf" />
    <path d="M1.500 8h21v13h-21z" fill="#fbe197" />
    <path d="M5.500 22v-8.500l2-1.500h9l2 1.500V22h-4v-5h-5v5z" fill="#39b0e5" />
  </Svg>
);

const OneNote = () => (
  <Svg size={24} box={24}>
    <path d="M0 0h24v24H0z" fill="#7719aa" />
    <path d="M15 4.500h5.500v15H15M15 7h4M15 10h4M15 13h4M15 16h4" stroke="#fff" strokeWidth="1.200" />
    <path d="M3 5l11-2v18L3 19z" fill="#fff" />
    <text x="5" y="15.500" fontSize="10" fontWeight="700" fontFamily="Liberation Sans, sans-serif" fill="#7719aa">N</text>
  </Svg>
);

const Calculator = () => (
  <Svg size={24} box={24}>
    <path d="M3 0h18v24H3z" fill="#fff" />
    <path d="M5.500 2.500h13V6h-13z" fill="#302e24" />
    <path d="M6 10h3M11 10h3M16 10h3M6 15h3M11 15h3M16 15h3M6 20h3M11 20h3M16 20h3" stroke="#302e24" strokeWidth="2" />
  </Svg>
);

const Camtasia = ({ red = false }: { red?: boolean }) => (
  <Svg size={24} box={24}>
    <rect width="24" height="24" rx="1" fill={red ? "#fb503f" : "#4fa008"} />
    <path d="M0 0h24L0 14z" fill={red ? "#ff6a45" : "#6bb51a"} />
    <path d="M18.500 6H9.500L6.500 9v6l3 3h9" stroke="#fff" strokeWidth="4" />
  </Svg>
);

const LockSync = () => (
  <Svg size={24} box={24}>
    <path d="M8.500 11V7c0-5 7-5 7 0v4" stroke="#b9b9b9" strokeWidth="2" />
    <rect x="6" y="10" width="13" height="10" rx="1" fill="#4a4a4a" stroke="#8d8d8d" />
    <path d="M8 13h9M8 15h9M8 17h9" stroke="#777" />
    <path d="M1 0h8L7 2.500l2 3L6.500 8 4 5.500 1 8z" fill="#2e7df0" />
    <path d="M24 24h-9l2.500-2.500-2-3L18 16l2.500 2.500L24 15z" fill="#22c336" />
  </Svg>
);

const Snip = () => (
  <Svg size={24} box={24}>
    <ellipse cx="12" cy="8" rx="10.500" ry="6" transform="rotate(-20 12 8)" fill="#f3f3f3" stroke="#c5302c" strokeWidth="1.500" />
    <path d="M6 10l12-5M9 5l6 6" stroke="#999" />
    <path d="M2 17l8-4 3 2" stroke="#d8d8d8" strokeWidth="2.500" />
    <path d="M22 11l-7 7M15 11l4 8" stroke="#d7dfe8" strokeWidth="1.600" />
    <circle cx="14" cy="20" r="2.600" stroke="#2c8cd6" strokeWidth="1.700" />
    <circle cx="20" cy="18" r="2.600" stroke="#2c8cd6" strokeWidth="1.700" />
  </Svg>
);

const Word = () => (
  <Svg size={24} box={24}>
    <path d="M12 3h11v18H12z" fill="#fff" stroke="#2b579a" />
    <path d="M14 6h7M14 9h7M14 12h7M14 15h7M14 18h7" stroke="#2b579a" strokeWidth="1.200" />
    <path d="M1 3l13-2.500v23L1 21z" fill="#2b579a" />
    <text x="2.500" y="16" fontSize="10" fontWeight="700" fontFamily="Liberation Sans, sans-serif" fill="#fff">W</text>
  </Svg>
);

const apps = [
  { label: "Start", icon: <Windows /> },
  { label: "Task View", icon: <TaskView /> },
  { label: "Firefox", icon: <Firefox /> },
  { label: "File Explorer", icon: <Explorer />, open: true },
  { label: "OneNote", icon: <OneNote /> },
  { label: "PDF Annotator", icon: <AppLogo size={24} />, open: true },
  { label: "Calculator", icon: <Calculator /> },
  { label: "Camtasia", icon: <Camtasia /> },
  { label: "Sync", icon: <LockSync /> },
  { label: "Snipping Tool", icon: <Snip /> },
  { label: "Word", icon: <Word />, open: true },
  { label: "Recorder", icon: <Camtasia red />, open: true, focused: true },
];

function Taskbar() {
  return (
    <nav className="flex h-10 items-stretch bg-linear-to-r from-[#20241f] via-[#392b1e] via-50% to-[#202e20] text-xs text-white">
      <div className="flex">
        {apps.map((app) => (
          <button
            key={app.label}
            aria-label={app.label}
            className={clsx("flex w-[49px] flex-col items-center", app.focused && "bg-[#5c574c]")}
          >
            <span className="flex flex-1 items-center">{app.icon}</span>
            {app.open && <span className={clsx("-mt-0.5 h-0.5 bg-[#76b9ed]", app.focused ? "w-full" : "w-10")} />}
          </button>
        ))}
      </div>
      <div className="ml-auto flex items-center">
        <button aria-label="Hidden icons" className="flex w-6 justify-center">
          <Svg><path d="M2.500 11L8 5.500l5.500 5.500" stroke="#fff" strokeWidth="1.400" /></Svg>
        </button>
        <button aria-label="Network" className="flex w-6 justify-center">
          <Svg><path d="M5.500 3.500h10v8h-10M9.500 12v3M6 15.500h8M.5 2.500h4v3h-4zM2.500 6v5.500h3" stroke="#fff" /></Svg>
        </button>
        <button aria-label="Volume" className="flex w-6 justify-center">
          <Svg>
            <path d="M.5 6h2L6 2.500v11L2.500 10h-2zM8 6c1 1 1 3 0 4M10 4c2.200 2 2.200 6 0 8" stroke="#fff" />
            <path d="M12.500 2.500c3 3 3 8 0 11" stroke="#777" />
          </Svg>
        </button>
        <button aria-label="Pen workspace" className="flex w-8 justify-center">
          <Svg><path d="M5 10L12 1.500l2 1.500-7 9-3 2zM5 8.500C1 8 0 12 3 13s4-4 8-4 5 3 2 4-5-1-3-2" stroke="#fff" strokeWidth="1.200" /></Svg>
        </button>
        <button className="w-9 text-center leading-[17px]">ENG<br />US</button>
        <button className="w-[70px] text-center leading-[18px]">3:32 PM<br />2019-04-06</button>
        <button aria-label="Notifications" className="flex w-10 justify-center">
          <Svg><path d="M.5 1.500h15v10.500h-5L8 14.500 5.500 12h-5z" stroke="#fff" /></Svg>
        </button>
        <span className="ml-2 mr-1 h-full w-px bg-[#7c857b]" />
      </div>
    </nav>
  );
}

export default function App() {
  return (
    <div className="flex h-screen flex-col overflow-hidden bg-[#f4f4f4] font-['Noto_Sans',sans-serif]">
      <TitleBar />
      <MenuBar />
      <MainToolbar />
      <TabStrip />
      <div className="flex min-h-0 flex-1 border-t border-white">
        <Sidebar />
        <div className="flex min-w-0 flex-1 flex-col">
          <AnnotationToolbar />
          <div className="flex min-h-0 flex-1">
            <Document />
            <ScrollBar />
          </div>
        </div>
      </div>
      <StatusBar />
      <Taskbar />
    </div>
  );
}
